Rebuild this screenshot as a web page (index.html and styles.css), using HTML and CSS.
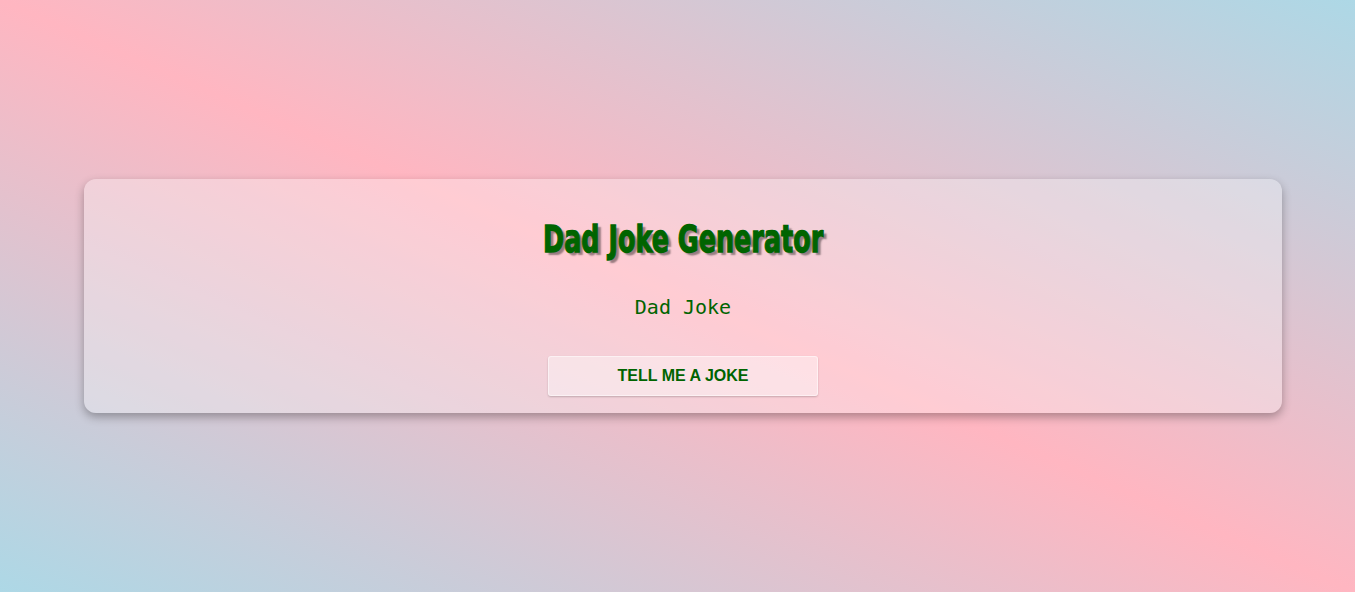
FILE: index.html
```html
<!DOCTYPE html>
<html lang="en">
<head>
<meta charset="utf-8">
<title>Dad Joke Generator</title>
<link rel="stylesheet" href="styles.css">
</head>
<body>
  <main class="card">
    <h1 class="title"><span class="title-text">Dad Joke Generator</span></h1>
    <p class="joke">Dad Joke</p>
    <button class="joke-btn" type="button">TELL ME A JOKE</button>
  </main>
</body>
</html>
```
FILE: styles.css
```css
html, body {
  margin: 0;
  height: 100%;
}

body {
  min-height: 100vh;
  display: flex;
  align-items: center;
  justify-content: center;
  background: linear-gradient(to top right, #add8e6 0%, #ffb6c1 50%, #add8e6 100%);
  font-family: "Liberation Sans", Arial, sans-serif;
}

.card {
  box-sizing: border-box;
  width: 1198px;
  margin-left: 11px;
  padding: 38px 20px 17px;
  display: flex;
  flex-direction: column;
  align-items: center;
  background: rgba(255, 255, 255, 0.3);
  border-radius: 12px;
  box-shadow: 0 4px 10px rgba(0, 0, 0, 0.3);
}

.title {
  margin: 0;
  font-family: Impact, "DejaVu Sans", sans-serif;
  font-weight: bold;
  font-size: 38px;
  line-height: 44px;
  color: #006400;
}

.title-text {
  display: inline-block;
  transform: scaleX(0.67);
  -webkit-text-stroke: 1.4px #006400;
  text-shadow: 5px 3px 2px rgba(0, 0, 0, 0.4);
}

.joke {
  margin: 34px 0 0;
  font-family: "DejaVu Sans Mono", monospace;
  font-size: 20px;
  line-height: 24px;
  color: #006400;
}

.joke-btn {
  margin-top: 37px;
  width: 270px;
  height: 40px;
  font-family: "Liberation Sans", Arial, sans-serif;
  font-size: 16px;
  font-weight: bold;
  color: #006400;
  background: rgba(255, 255, 255, 0.4);
  border: 1px solid rgba(255, 255, 255, 0.5);
  border-radius: 3px;
  box-shadow: 0 1px 2px rgba(0, 0, 0, 0.2);
  cursor: pointer;
}
```
